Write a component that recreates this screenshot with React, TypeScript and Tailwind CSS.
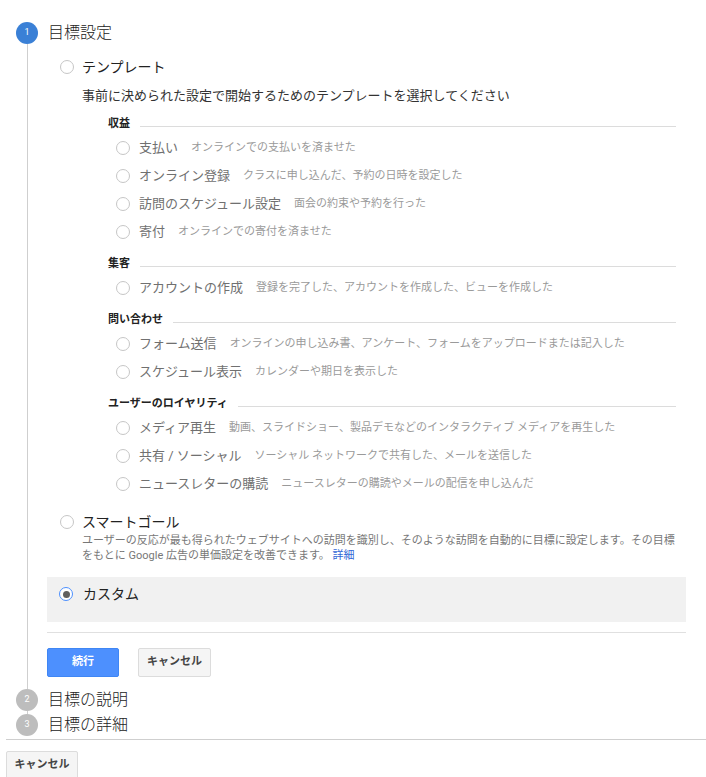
import React from "react";

const font = "font-['Roboto','Noto_Sans_CJK_JP',sans-serif]";

type Item = { label: string; desc: string };

const sections: { title: string; items: Item[] }[] = [
    {
        title: "収益",
        items: [
            {label: "支払い", desc: "オンラインでの支払いを済ませた"},
            {label: "オンライン登録", desc: "クラスに申し込んだ、予約の日時を設定した"},
            {label: "訪問のスケジュール設定", desc: "面会の約束や予約を行った"},
            {label: "寄付", desc: "オンラインでの寄付を済ませた"},
        ],
    },
    {
        title: "集客",
        items: [
            {label: "アカウントの作成", desc: "登録を完了した、アカウントを作成した、ビューを作成した"},
        ],
    },
    {
        title: "問い合わせ",
        items: [
            {label: "フォーム送信", desc: "オンラインの申し込み書、アンケート、フォームをアップロードまたは記入した"},
            {label: "スケジュール表示", desc: "カレンダーや期日を表示した"},
        ],
    },
    {
        title: "ユーザーのロイヤリティ",
        items: [
            {label: "メディア再生", desc: "動画、スライドショー、製品デモなどのインタラクティブ メディアを再生した"},
            {label: "共有 / ソーシャル", desc: "ソーシャル ネットワークで共有した、メールを送信した"},
            {label: "ニュースレターの購読", desc: "ニュースレターの購読やメールの配信を申し込んだ"},
        ],
    },
]

function Radio({checked}: {checked?: boolean}) {
    if (checked) {
        return (
            <span className="flex h-[14px] w-[14px] shrink-0 items-center justify-center rounded-full border border-[#4d90fe] bg-white">
                <span className="h-[7px] w-[7px] rounded-full bg-[#5f5f5f]"/>
            </span>
        )
    }
    return <span className="block h-[14px] w-[14px] shrink-0 rounded-full border border-[#c6c6c6] bg-white"/>
}

function StepCircle({n, active}: {n: number, active?: boolean}) {
    return (
        <span className={active
            ? "flex h-[22px] w-[22px] shrink-0 items-center justify-center rounded-full bg-[#3a80d6] text-[9px] text-white"
            : "flex h-[22px] w-[22px] shrink-0 items-center justify-center rounded-full bg-[#bdbdbd] text-[9px] text-white"}>
            {n}
        </span>
    )
}

export default function App() {
    return (
        <div className={`${font} w-[706px] bg-white pt-[22px] text-[#222]`}>
            {/* step 1 */}
            <div className="flex">
                <div className="ml-[16px] flex w-[22px] flex-col items-center">
                    <StepCircle n={1} active/>
                    <div className="w-px flex-1 bg-[#cfcfcf]"/>
                </div>
                <div className="w-[648px] pb-[12px] pl-[9px]">
                    <h2 className="h-[22px] pl-px text-[16px] font-light leading-[22px] text-[#222]">目標設定</h2>

                    <label className="mt-[13px] flex h-[20px] items-center gap-[8px] pl-[13px]">
                        <Radio/>
                        <span className="text-[14px] text-[#222]">テンプレート</span>
                    </label>
                    <p className="mt-[9px] h-[20px] pl-[35px] text-[13px] leading-[20px] text-[#333]">
                        事前に決められた設定で開始するためのテンプレートを選択してください
                    </p>

                    <div className="pl-[61px] pr-[10px]">
                        {sections.map((s) => (
                            <div key={s.title}>
                                <div className="mt-[10px] flex h-[16px] items-center gap-[10px]">
                                    <span className="text-[11px] font-bold leading-[16px] text-[#222]">{s.title}</span>
                                    <span className="mt-[5px] h-px flex-1 bg-[#dcdcdc]"/>
                                </div>
                                <div className="mt-[2px]">
                                    {s.items.map((it) => (
                                        <label key={it.label} className="flex h-[28px] items-center pl-[8px]">
                                            <Radio/>
                                            <span className="ml-[9px] text-[13px] text-[#707070]">{it.label}</span>
                                            <span className="ml-[13px] text-[11px] text-[#9a9a9a]">{it.desc}</span>
                                        </label>
                                    ))}
                                </div>
                            </div>
                        ))}
                    </div>

                    <label className="mt-[14px] flex h-[20px] items-center gap-[8px] pl-[13px]">
                        <Radio/>
                        <span className="text-[14px] text-[#222]">スマートゴール</span>
                    </label>
                    <p className="mt-px pl-[35px] pr-[8px] text-[11px] leading-[15px] text-[#777]">
                        ユーザーの反応が最も得られたウェブサイトへの訪問を識別し、そのような訪問を自動的に目標に設定します。その目標をもとに Google 広告の単価設定を改善できます。 <a className="text-[#3367d6]">詳細</a>
                    </p>

                    <div className="mt-[14px] h-[45px] bg-[#f1f1f1] pl-[12px] pt-[7px]">
                        <label className="flex h-[20px] items-center gap-[10px]">
                            <Radio checked/>
                            <span className="text-[14px] text-[#222]">カスタム</span>
                        </label>
                    </div>

                    <div className="mt-[10px] h-px bg-[#e0e0e0]"/>

                    <div className="mt-[15px] flex gap-[19px]">
                        <button className="h-[29px] w-[72px] rounded-[2px] border border-[#3f86f4] bg-[#4d90fe] text-[11px] font-bold text-white">
                            続行
                        </button>
                        <button className="h-[29px] w-[73px] rounded-[2px] border border-[#dcdcdc] bg-[#f5f5f5] text-[11px] font-bold text-[#444]">
                            キャンセル
                        </button>
                    </div>
                </div>
            </div>

            {/* step 2 */}
            <div className="flex h-[25px]">
                <div className="ml-[16px] flex w-[22px] flex-col items-center">
                    <StepCircle n={2}/>
                    <div className="w-px flex-1 bg-[#cfcfcf]"/>
                </div>
                <h2 className="h-[22px] pl-[10px] text-[16px] font-light leading-[22px] text-[#222]">目標の説明</h2>
            </div>

            {/* step 3 */}
            <div className="flex h-[22px]">
                <div className="ml-[16px] w-[22px]">
                    <StepCircle n={3}/>
                </div>
                <h2 className="h-[22px] pl-[10px] text-[16px] font-light leading-[22px] text-[#222]">目標の詳細</h2>
            </div>

            <div className="ml-[6px] mt-[3px] h-px bg-[#cfcfcf]"/>

            <div className="pb-[10px] pl-[6px] pt-[11px]">
                <button className="h-[29px] w-[72px] rounded-[2px] border border-[#dcdcdc] bg-[#f5f5f5] text-[11px] font-bold text-[#444]">
                    キャンセル
                </button>
            </div>
        </div>
    )
}
